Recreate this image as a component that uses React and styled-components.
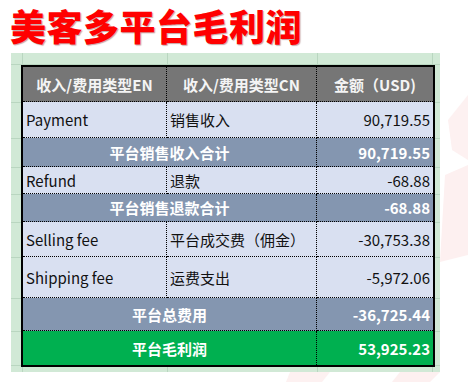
import React from "react";
import styled, { createGlobalStyle } from "styled-components";

const GlobalStyle = createGlobalStyle`
  html, body {
    margin: 0;
    background: #ffffff;
  }
  body {
    font-family: "Noto Sans CJK SC", "Noto Sans", sans-serif;
  }
`;

// spreadsheet grid lines (relative to the green sheet)
const colLines = [11, 156, 306, 421];
const rowLines = [11, 49, 85, 114, 141, 169, 204, 245, 278, 312];

const gridBackground = [
  ...colLines.map(x => `linear-gradient(90deg, transparent ${x}px, #b9d6c0 ${x}px, #b9d6c0 ${x + 1}px, transparent ${x + 1}px)`),
  ...rowLines.map(y => `linear-gradient(180deg, transparent ${y}px, #b9d6c0 ${y}px, #b9d6c0 ${y + 1}px, transparent ${y + 1}px)`)
].join(", ");

const Page = styled.div`
  position: relative;
  width: 468px;
  height: 382px;
  overflow: hidden;
  background: #ffffff;
`;

const Watermark = styled.svg`
  position: absolute;
  left: 0;
  top: 0;
  width: 468px;
  height: 382px;
  pointer-events: none;
`;

const Content = styled.div`
  position: relative;
`;

const Title = styled.h1`
  margin: 0;
  height: 53px;
  box-sizing: border-box;
  padding: 5px 0 0 10px;
  font-size: 36px;
  line-height: 40px;
  font-weight: 900;
  color: #ff0000;
  letter-spacing: 0.5px;
  text-shadow: 1px 1px 1px rgba(90, 0, 0, 0.35);
`;

const Sheet = styled.div`
  margin-left: 11px;
  width: 429px;
  height: 319px;
  box-sizing: border-box;
  padding: 12px 0 0 10px;
  background-color: #d1e9d6;
  background-image: ${gridBackground};
`;

const Table = styled.div`
  width: 414px;
  box-sizing: border-box;
  border: 2px solid #000;
  display: grid;
  grid-template-columns: 144px 150px 116px;
  grid-template-rows: 35px 36px 29px 27px 28px 35px 41px 33px 34px;
`;

const tones = {
  head: { bg: "#767676", fg: "#f4f4f4", weight: 700 },
  data: { bg: "#d9e0f1", fg: "#111111", weight: 400 },
  sub: { bg: "#8496b0", fg: "#ffffff", weight: 700 },
  profit: { bg: "#00b050", fg: "#ffffff", weight: 700 }
};

const justify = { left: "flex-start", center: "center", right: "flex-end" };

const Cell = styled.div`
  grid-column: span ${p => p.$span || 1};
  display: flex;
  align-items: center;
  justify-content: ${p => justify[p.$align || "left"]};
  padding: 0 3px;
  box-sizing: border-box;
  background: ${p => tones[p.$tone].bg};
  color: ${p => tones[p.$tone].fg};
  font-weight: ${p => tones[p.$tone].weight};
  font-size: 15px;
  white-space: nowrap;
  border-right: ${p => (p.$last ? "none" : "1px dotted #000")};
  border-bottom: ${p => (p.$bottom ? "none" : "1px dotted #000")};
`;

const rows = [
  { type: "data", en: "Payment", cn: "销售收入", amount: "90,719.55" },
  { type: "sub", label: "平台销售收入合计", amount: "90,719.55" },
  { type: "data", en: "Refund", cn: "退款", amount: "-68.88" },
  { type: "sub", label: "平台销售退款合计", amount: "-68.88" },
  { type: "data", en: "Selling fee", cn: "平台成交费（佣金）", amount: "-30,753.38" },
  { type: "data", en: "Shipping fee", cn: "运费支出", amount: "-5,972.06" },
  { type: "sub", label: "平台总费用", amount: "-36,725.44" },
  { type: "profit", label: "平台毛利润", amount: "53,925.23" }
];

export default function App() {
  return (
    <Page>
      <GlobalStyle />
      <Watermark viewBox="0 0 468 382">
        <polygon points="448,120 468,95 468,160 452,150" fill="#fdf1f1" />
        <polygon points="445,175 468,165 468,255 440,262" fill="#fdf0f0" />
        <polygon points="290,372 330,372 322,382 286,382" fill="#fdf1f1" />
        <polygon points="400,372 440,372 430,382 392,382" fill="#fdf0f0" />
      </Watermark>
      <Content>
        <Title>美客多平台毛利润</Title>
        <Sheet>
          <Table>
            <Cell $tone="head" $align="center">收入/费用类型EN</Cell>
            <Cell $tone="head" $align="center">收入/费用类型CN</Cell>
            <Cell $tone="head" $align="center" $last>金额（USD)</Cell>
            {rows.map((r, i) => {
              const bottom = i === rows.length - 1;
              if (r.type === "data") {
                return (
                  <React.Fragment key={i}>
                    <Cell $tone="data">{r.en}</Cell>
                    <Cell $tone="data">{r.cn}</Cell>
                    <Cell $tone="data" $align="right" $last>{r.amount}</Cell>
                  </React.Fragment>
                );
              }
              return (
                <React.Fragment key={i}>
                  <Cell $tone={r.type} $align="center" $span={2} $bottom={bottom}>{r.label}</Cell>
                  <Cell $tone={r.type} $align="right" $last $bottom={bottom}>{r.amount}</Cell>
                </React.Fragment>
              );
            })}
          </Table>
        </Sheet>
      </Content>
    </Page>
  );
}
